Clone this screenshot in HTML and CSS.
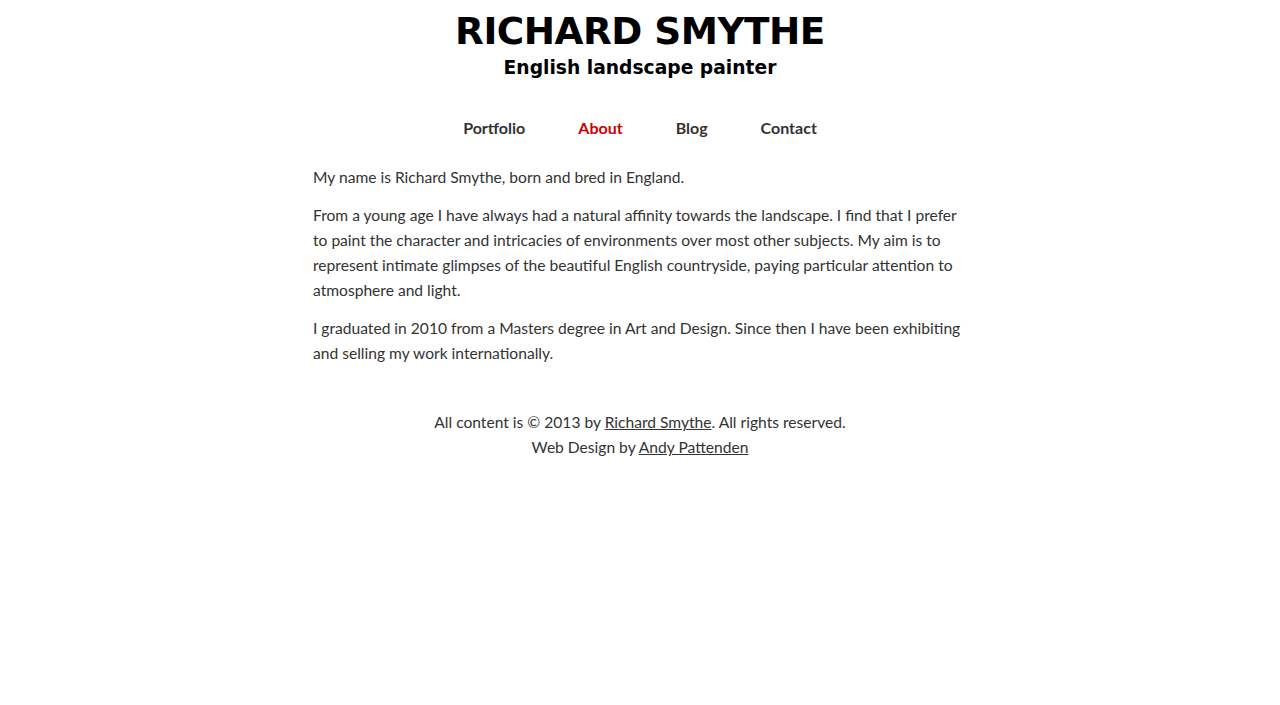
FILE: index.html
```html
<!DOCTYPE html>
<html>
<head>
<meta charset="utf-8">
<link rel="stylesheet" href="styles.css">
</head>
<body>
<header class="site-header">
  <h1 class="title">RICHARD SMYTHE</h1>
  <h2 class="subtitle">English landscape painter</h2>
</header>
<nav class="nav">
  <a href="#" class="nav-link">Portfolio</a>
  <a href="#" class="nav-link active">About</a>
  <a href="#" class="nav-link">Blog</a>
  <a href="#" class="nav-link">Contact</a>
</nav>
<main class="content">
  <p>My name is Richard Smythe, born and bred in England.</p>
  <p>From a young age I have always had a natural affinity towards the landscape. I find that I prefer to paint the character and intricacies of environments over most other subjects. My aim is to represent intimate glimpses of the beautiful English countryside, paying particular attention to atmosphere and light.</p>
  <p>I graduated in 2010 from a Masters degree in Art and Design. Since then I have been exhibiting and selling my work internationally.</p>
</main>
<footer class="footer">
  <p>All content is © 2013 by <a href="#">Richard Smythe</a>. All rights reserved.<br>Web Design by <a href="#">Andy Pattenden</a></p>
</footer>
</body>
</html>
```
FILE: styles.css
```css
html, body {
  margin: 0;
  padding: 0;
  background: #fff;
}
body {
  font-family: "Lato", "Open Sans", sans-serif;
  color: #333;
  font-size: 15.6px;
}
.site-header {
  text-align: center;
  padding-top: 9px;
}
.title {
  font-family: "DejaVu Sans", Verdana, sans-serif;
  font-weight: bold;
  font-size: 37.4px;
  line-height: 45px;
  margin: 0;
  color: #000;
  letter-spacing: -0.5px;
}
.subtitle {
  font-family: "DejaVu Sans", Verdana, sans-serif;
  font-weight: bold;
  font-size: 18.7px;
  line-height: 28px;
  margin: 0;
  color: #000;
}
.nav {
  display: flex;
  justify-content: center;
  gap: 53px;
  margin-top: 36px;
}
.nav-link {
  font-weight: bold;
  font-size: 16px;
  color: #333;
  text-decoration: none;
  line-height: 20px;
}
.nav-link.active {
  color: #c00;
}
.content {
  width: 654px;
  margin: 27px auto 0;
  line-height: 25px;
}
.content p {
  margin: 0 0 13px;
}
.footer {
  text-align: center;
  line-height: 25px;
  margin-top: 44px;
}
.footer p {
  margin: 0;
}
.footer a {
  color: #333;
}
```
